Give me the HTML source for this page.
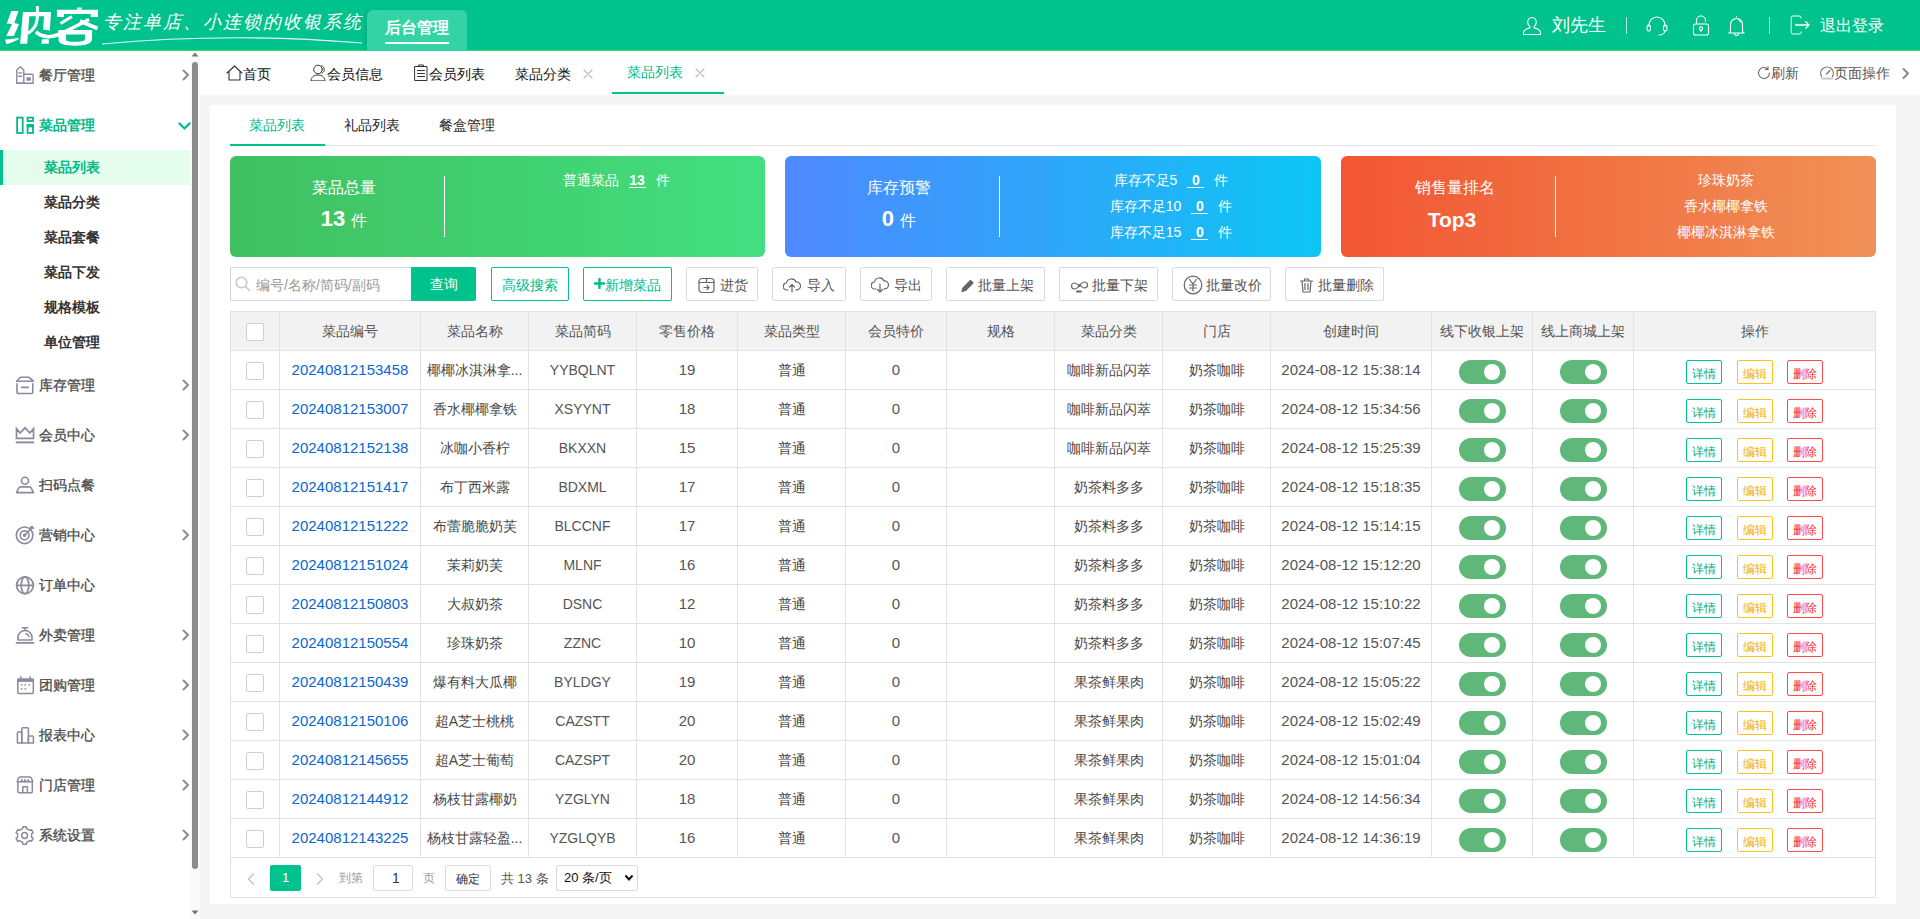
<!DOCTYPE html>
<html><head><meta charset="utf-8"><title>纳客</title><style>

*{box-sizing:border-box;margin:0;padding:0}
html,body{width:1920px;height:919px;overflow:hidden}
body{position:relative;background:#f5f5f5;font-family:"Liberation Sans",sans-serif;font-size:14px;color:#333}
.abs{position:absolute}
#hdr{left:0;top:0;width:1920px;height:51px;background:#00c28c;border-bottom:1px solid #44d36e}
#side{left:0;top:51px;width:190px;height:868px;background:#fff}
#sb{left:190px;top:51px;width:10px;height:868px;background:#fafafa}
#tabs{left:200px;top:51px;width:1720px;height:44px;background:#fff}
#panel{left:210px;top:105px;width:1686px;height:799px;background:#fff}
.t{position:absolute;white-space:nowrap;line-height:1}
.mi{position:absolute;left:0;width:190px;height:50px}
.mi .lb{position:absolute;left:39px;top:18px;font-size:14px;font-weight:bold;color:#555;line-height:14px;white-space:nowrap}
.mi svg.ic{position:absolute;left:15px;top:15px}
.mi svg.ch{position:absolute;left:180px;top:19px}
.si{position:absolute;left:0;width:190px;height:35px}
.si .lb{position:absolute;left:44px;top:11px;font-size:14px;font-weight:bold;color:#333;line-height:14px;white-space:nowrap}
.btn{position:absolute;top:267px;height:34px;border:1px solid #dcdcdc;border-radius:2px;background:#fff;color:#555;font-size:14px;line-height:14px;white-space:nowrap}
.btn span{position:absolute;top:10px}
.btn svg{position:absolute}
.card{position:absolute;top:156px;height:101px;border-radius:6px;color:#fff}
.card .dv{position:absolute;left:214px;top:20px;width:1px;height:61px;background:#fff}
.cell{position:absolute;text-align:center;white-space:nowrap;line-height:1}
.vl{position:absolute;top:311px;width:1px;height:587px;background:#e2e2e2}
.hl{position:absolute;left:230px;width:1646px;height:1px;background:#e2e2e2}
.tg{position:absolute;width:47px;height:24px;border-radius:12px;background:#5fb87a}
.tg:after{content:"";position:absolute;left:25px;top:4px;width:16px;height:16px;border-radius:50%;background:#fff}
.ob{position:absolute;width:36px;height:24px;border:1px solid;border-radius:2px;font-size:12px;line-height:12px;text-align:center;padding-top:7px;background:#fff}
.cb{position:absolute;left:246px;width:18px;height:18px;border:1px solid #cfcfcf;border-radius:2px;background:#fff}

</style></head><body>
<div id="hdr" class="abs">
<svg class="abs" style="left:0;top:0" width="120" height="50" viewBox="0 0 120 50" fill="#fff">
<path d="M11.2 10.9L18.5 10.9L14.3 22.9L19 23.9L13.9 35.9L6.3 35.9L12 23.9L6.8 23.4Z"/>
<path d="M5.2 39.5Q12 39.3 18.6 37.8L18.4 39.6Q13 42.5 7.5 44L6 43.6Z"/>
<path d="M22.9 12L29.7 12L27.2 43.8L20.1 43.8Z"/>
<path d="M29 12L51.1 12L49.8 30.5L43 29.5L44 16.3L29 16.3Z"/>
<path d="M35.9 6L38.9 6L38.9 16.3L35.9 16.3Z"/>
<path d="M37.4 15C37.4 24 35 28.5 28 33.5" fill="none" stroke="#fff" stroke-width="3"/>
<path d="M35.8 32Q46 40 58.5 34.5Q72 28.5 89 19.5" fill="none" stroke="#fff" stroke-width="3.6"/>
<path d="M42 39.2L49 39.2L48.7 43.8L41.4 43.8Z"/>
<path d="M56.9 9.8L98 9.8L98 17L90.8 17L90.8 14L64 14L64 17L56.9 17Z"/>
<path d="M77 7.5L81.7 7.5L81.7 9.8L77 9.8Z"/>
<path d="M60.5 23.5L72 16.5" fill="none" stroke="#fff" stroke-width="3"/>
<path d="M80 21L97.5 28.5" fill="none" stroke="#fff" stroke-width="4"/>
<path fill-rule="evenodd" d="M58.2 30L92.2 30L92 40Q90 45.7 75 45.7Q59 45.7 58.5 40Z M66 34.6L85 34.6L84.8 40Q84 41.8 75 41.8Q66.5 41.8 66 40Z"/>
</svg>
<div class="t" style="left:103px;top:13px;font-size:18px;color:#fff;font-family:'Liberation Serif',serif;font-style:italic;letter-spacing:2px">专注单店、小连锁的收银系统</div>
<svg class="abs" style="left:100px;top:34px" width="270" height="14"><path d="M2 10 Q 130 -2 262 9" stroke="#fff" stroke-width="1.1" fill="none" opacity=".9"/></svg>
<div class="abs" style="left:367px;top:10px;width:100px;height:41px;background:#33d3a5;border-radius:6px 6px 0 0;box-shadow:-2px 0 3px rgba(0,60,40,.12)"></div>
<div class="t" style="left:385px;top:20px;font-size:16px;font-weight:bold;color:#fff">后台管理</div>
<div class="abs" style="left:385px;top:42px;width:64px;height:2px;background:#fff"></div>
<svg class="abs" style="left:1522px;top:16px" width="20" height="20" viewBox="0 0 20 20" fill="none" stroke="#fff" stroke-width="1.1">
<path d="M10 1.5c-2.6 0-4.3 2-4.3 4.6 0 2 1 3.7 2.2 4.5v1.3c-3.6.9-6.4 2.7-6.4 4.8v1.8h17v-1.8c0-2.1-2.8-3.9-6.4-4.8v-1.3c1.2-.8 2.2-2.5 2.2-4.5 0-2.6-1.700-4.6-4.3-4.6z"/></svg>
<div class="t" style="left:1552px;top:16px;font-size:18px;color:#fff">刘先生</div>
<div class="abs" style="left:1626px;top:17px;width:1px;height:17px;background:#b9eedd"></div>
<svg class="abs" style="left:1646px;top:16px" width="22" height="20" viewBox="0 0 22 20" fill="none" stroke="#fff" stroke-width="1.1">
<path d="M3 11V9a8 8 0 0 1 16 0v2"/><rect x="1" y="9" width="3.5" height="6" rx="1.7"/><rect x="17.5" y="9" width="3.5" height="6" rx="1.7"/><path d="M19 15c-.5 2.5-3 4-6.5 4"/></svg>
<svg class="abs" style="left:1692px;top:15px" width="18" height="21" viewBox="0 0 18 21" fill="none" stroke="#fff" stroke-width="1.1">
<path d="M4.5 9V5.5a4.5 4.5 0 0 1 9 0V7"/><rect x="1.5" y="9" width="15" height="11" rx="2"/><circle cx="9" cy="13.5" r="1.6"/><path d="M9 15.1v1.8"/></svg>
<svg class="abs" style="left:1728px;top:15px" width="17" height="21" viewBox="0 0 17 21" fill="none" stroke="#fff" stroke-width="1.1">
<path d="M8.5 1v1.2M2.5 16.5v-7a6 6 0 0 1 12 0v7l1.5 1.5H1z"/><path d="M6.5 18.5a2 2 0 0 0 4 0"/><path d="M10.5 4.5c1.2.6 2 1.6 2.3 2.8"/></svg>
<div class="abs" style="left:1769px;top:17px;width:1px;height:17px;background:#b9eedd"></div>
<svg class="abs" style="left:1790px;top:15px" width="21" height="20" viewBox="0 0 21 20" fill="none" stroke-width="1.3">
<path d="M11 3.5V2.8A1.8 1.8 0 0 0 9.2 1H3A1.8 1.8 0 0 0 1.2 2.8v14.4A1.8 1.8 0 0 0 3 19h6.2a1.8 1.8 0 0 0 1.8-1.8v-.7" stroke="#a8ead4"/>
<path d="M5 10h14M15.5 6.5 19 10l-3.5 3.5" stroke="#fff"/></svg>
<div class="t" style="left:1820px;top:18px;font-size:16px;color:#fff">退出登录</div>
</div>
<div id="side" class="abs"></div>
<div id="sb" class="abs"></div>
<div class="abs" style="left:192px;top:62px;width:6px;height:807px;background:#8b8b8b;border-radius:3px"></div>
<svg class="abs" style="left:190px;top:50px" width="10" height="8"><path d="M1.5 6.5h7L5 2.5z" fill="#777"/></svg>
<svg class="abs" style="left:190px;top:909px" width="10" height="8"><path d="M1.5 1.5h7L5 5.5z" fill="#777"/></svg>
<svg class="abs" style="left:15px;top:65px" width="20" height="20" viewBox="0 0 20 20" fill="none" stroke="#8c8a9b" stroke-width="1.9" stroke-linecap="round" stroke-linejoin="round"><g stroke-width="1.4"><path d="M1.8 18.3V5L5.3 1.8 8.8 5V18.3z"/><path d="M3.8 7.9h3M3.8 11.3h3"/><path d="M8.8 9.2h8.3a1 1 0 0 1 1 1v8.1H1.8"/></g><rect x="11.5" y="12.3" width="4.3" height="3.4" fill="#8c8a9b" stroke="none"/></svg>
<div class="t" style="left:39px;top:68px;font-size:14px;color:#4a4a4a;-webkit-text-stroke:0.3px #4a4a4a">餐厅管理</div>
<svg class="abs" style="left:181px;top:69px" width="10" height="12" viewBox="0 0 10 12" fill="none" stroke="#8c8a9b" stroke-width="2" stroke-linecap="round" stroke-linejoin="round"><path d="M2.5 1.5 7 6l-4.5 4.5"/></svg>
<svg class="abs" style="left:15px;top:115px" width="20" height="20" viewBox="0 0 20 20" fill="none" stroke="#00b98a" stroke-width="1.9" stroke-linecap="round" stroke-linejoin="round"><g stroke-width="1.8" stroke-linejoin="miter"><rect x="2.1" y="2.6" width="5.6" height="15.4"/><rect x="12.6" y="2.6" width="5.4" height="3.4"/><rect x="12.6" y="10.1" width="5.4" height="7.9"/></g><rect x="11.7" y="9.2" width="7.2" height="3.2" fill="#00b98a" stroke="none"/></svg>
<div class="t" style="left:39px;top:118px;font-size:14px;color:#00b98a;font-weight:bold">菜品管理</div>
<svg class="abs" style="left:178px;top:122px" width="13" height="9" viewBox="0 0 13 9" fill="none" stroke="#00b98a" stroke-width="2.2" stroke-linecap="round" stroke-linejoin="round"><path d="M1.5 1.5 6.5 6.5l5-5"/></svg>
<svg class="abs" style="left:15px;top:375px" width="20" height="20" viewBox="0 0 20 20" fill="none" stroke="#8c8a9b" stroke-width="1.9" stroke-linecap="round" stroke-linejoin="round"><g stroke-width="1.6"><path d="M1.5 6.2 5.5 2.3h8.6l4.2 3.9z"/><path d="M2 8.9v8.3a1.3 1.3 0 0 0 1.3 1.3h13.2a1.3 1.3 0 0 0 1.3-1.3V8.9"/><path d="M6.5 12.4h6.8"/></g></svg>
<div class="t" style="left:39px;top:378px;font-size:14px;color:#4a4a4a;-webkit-text-stroke:0.3px #4a4a4a">库存管理</div>
<svg class="abs" style="left:181px;top:379px" width="10" height="12" viewBox="0 0 10 12" fill="none" stroke="#8c8a9b" stroke-width="2" stroke-linecap="round" stroke-linejoin="round"><path d="M2.5 1.5 7 6l-4.5 4.5"/></svg>
<svg class="abs" style="left:15px;top:425px" width="20" height="20" viewBox="0 0 20 20" fill="none" stroke="#8c8a9b" stroke-width="1.9" stroke-linecap="round" stroke-linejoin="round"><g stroke-width="1.7" stroke-linejoin="miter" stroke-linecap="butt"><path d="M1.5 13.3V3.6l3.6 4.4L10 2.8 14.9 8l3.6-4.4v9.7z"/><path d="M0.8 17.4h18.4" stroke-width="1.9"/></g></svg>
<div class="t" style="left:39px;top:428px;font-size:14px;color:#4a4a4a;-webkit-text-stroke:0.3px #4a4a4a">会员中心</div>
<svg class="abs" style="left:181px;top:429px" width="10" height="12" viewBox="0 0 10 12" fill="none" stroke="#8c8a9b" stroke-width="2" stroke-linecap="round" stroke-linejoin="round"><path d="M2.5 1.5 7 6l-4.5 4.5"/></svg>
<svg class="abs" style="left:15px;top:475px" width="20" height="20" viewBox="0 0 20 20" fill="none" stroke="#8c8a9b" stroke-width="1.9" stroke-linecap="round" stroke-linejoin="round"><g stroke-width="1.6"><circle cx="10" cy="5.8" r="3.5"/><path d="M1.5 17.6l2.3-4.6c.4-.7 1-1.1 1.8-1.1h8.8c.8 0 1.4.4 1.8 1.1l2.3 4.6z"/></g></svg>
<div class="t" style="left:39px;top:478px;font-size:14px;color:#4a4a4a;-webkit-text-stroke:0.3px #4a4a4a">扫码点餐</div>
<svg class="abs" style="left:15px;top:525px" width="20" height="20" viewBox="0 0 20 20" fill="none" stroke="#8c8a9b" stroke-width="1.9" stroke-linecap="round" stroke-linejoin="round"><g stroke-width="1.6"><circle cx="9.6" cy="10.3" r="8.3"/><circle cx="9.6" cy="10.3" r="4.4"/><circle cx="9.6" cy="10.3" r="1" fill="#8c8a9b"/><path d="M9.6 10.3 17 2.9"/><path d="M15.5 2.2 17.3 1.5 17.2 3.2 18.9 3.1" stroke-width="1.5"/></g></svg>
<div class="t" style="left:39px;top:528px;font-size:14px;color:#4a4a4a;-webkit-text-stroke:0.3px #4a4a4a">营销中心</div>
<svg class="abs" style="left:181px;top:529px" width="10" height="12" viewBox="0 0 10 12" fill="none" stroke="#8c8a9b" stroke-width="2" stroke-linecap="round" stroke-linejoin="round"><path d="M2.5 1.5 7 6l-4.5 4.5"/></svg>
<svg class="abs" style="left:15px;top:575px" width="20" height="20" viewBox="0 0 20 20" fill="none" stroke="#8c8a9b" stroke-width="1.9" stroke-linecap="round" stroke-linejoin="round"><g stroke-width="1.7"><circle cx="10" cy="10.3" r="8.4"/><path d="M1.6 10.3h16.8"/><ellipse cx="10" cy="10.3" rx="3.8" ry="8.4"/></g></svg>
<div class="t" style="left:39px;top:578px;font-size:14px;color:#4a4a4a;-webkit-text-stroke:0.3px #4a4a4a">订单中心</div>
<svg class="abs" style="left:15px;top:625px" width="20" height="20" viewBox="0 0 20 20" fill="none" stroke="#8c8a9b" stroke-width="1.9" stroke-linecap="round" stroke-linejoin="round"><g stroke-width="1.6"><path d="M7.3 2.7h5.4M10 2.7v2.6"/><path d="M3 15V12.5a7 7 0 0 1 14 0V15z"/><path d="M1.4 17.9h17.2"/><path d="M11 8.7c1.5.5 2.6 1.6 3.2 2.8"/></g></svg>
<div class="t" style="left:39px;top:628px;font-size:14px;color:#4a4a4a;-webkit-text-stroke:0.3px #4a4a4a">外卖管理</div>
<svg class="abs" style="left:181px;top:629px" width="10" height="12" viewBox="0 0 10 12" fill="none" stroke="#8c8a9b" stroke-width="2" stroke-linecap="round" stroke-linejoin="round"><path d="M2.5 1.5 7 6l-4.5 4.5"/></svg>
<svg class="abs" style="left:15px;top:675px" width="20" height="20" viewBox="0 0 20 20" fill="none" stroke="#8c8a9b" stroke-width="1.9" stroke-linecap="round" stroke-linejoin="round"><g stroke-width="1.5"><rect x="2.8" y="4.2" width="15.5" height="14.2" rx="1"/><path d="M5.8 1.8v2.6M15.1 1.8v2.6"/></g><rect x="2.2" y="3.6" width="16.7" height="3.3" fill="#8c8a9b" stroke="none"/><g fill="#8c8a9b" stroke="none"><rect x="5.9" y="9.2" width="1.5" height="1.5"/><rect x="9.6" y="9.2" width="1.5" height="1.5"/><rect x="13.5" y="9.2" width="1.5" height="1.5"/><rect x="5.9" y="13.1" width="1.5" height="1.5"/><rect x="9.6" y="13.1" width="1.5" height="1.5"/></g></svg>
<div class="t" style="left:39px;top:678px;font-size:14px;color:#4a4a4a;-webkit-text-stroke:0.3px #4a4a4a">团购管理</div>
<svg class="abs" style="left:181px;top:679px" width="10" height="12" viewBox="0 0 10 12" fill="none" stroke="#8c8a9b" stroke-width="2" stroke-linecap="round" stroke-linejoin="round"><path d="M2.5 1.5 7 6l-4.5 4.5"/></svg>
<svg class="abs" style="left:15px;top:725px" width="20" height="20" viewBox="0 0 20 20" fill="none" stroke="#8c8a9b" stroke-width="1.9" stroke-linecap="round" stroke-linejoin="round"><g stroke-width="1.5" stroke-linejoin="round"><path d="M2.4 18.1V7.8a.9.9 0 0 1 .9-.9h3.5V18.1z"/><path d="M6.8 18.1V3.6a.9.9 0 0 1 .9-.9h4.8a.9.9 0 0 1 .9.9V18.1z"/><path d="M13.4 18.1V11.9a.9.9 0 0 1 .9-.9h3.2a.9.9 0 0 1 .9.9v6.2z"/></g></svg>
<div class="t" style="left:39px;top:728px;font-size:14px;color:#4a4a4a;-webkit-text-stroke:0.3px #4a4a4a">报表中心</div>
<svg class="abs" style="left:181px;top:729px" width="10" height="12" viewBox="0 0 10 12" fill="none" stroke="#8c8a9b" stroke-width="2" stroke-linecap="round" stroke-linejoin="round"><path d="M2.5 1.5 7 6l-4.5 4.5"/></svg>
<svg class="abs" style="left:15px;top:775px" width="20" height="20" viewBox="0 0 20 20" fill="none" stroke="#8c8a9b" stroke-width="1.9" stroke-linecap="round" stroke-linejoin="round"><g stroke-width="1.5"><path d="M2.2 6.8 3.6 3a1.5 1.5 0 0 1 1.4-1h10a1.5 1.5 0 0 1 1.4 1l1.4 3.8z"/><path d="M6 6.8l.8-2.4.8 2.4M9.2 6.8l.8-2.4.8 2.4M12.4 6.8l.8-2.4.8 2.4" stroke-width="1.2"/><path d="M2.9 7v9.8a1 1 0 0 0 1 1h12.4a1 1 0 0 0 1-1V7"/><path d="M7.8 17.8v-6.1h4.6v6.1"/></g></svg>
<div class="t" style="left:39px;top:778px;font-size:14px;color:#4a4a4a;-webkit-text-stroke:0.3px #4a4a4a">门店管理</div>
<svg class="abs" style="left:181px;top:779px" width="10" height="12" viewBox="0 0 10 12" fill="none" stroke="#8c8a9b" stroke-width="2" stroke-linecap="round" stroke-linejoin="round"><path d="M2.5 1.5 7 6l-4.5 4.5"/></svg>
<svg class="abs" style="left:15px;top:825px" width="20" height="20" viewBox="0 0 20 20" fill="none" stroke="#8c8a9b" stroke-width="1.9" stroke-linecap="round" stroke-linejoin="round"><g stroke-width="1.5"><path d="M7.88 1.67 L11.32 1.67 L11.58 3.58 L14.60 5.32 L16.39 4.60 L18.11 7.57 L16.59 8.76 L16.59 12.24 L18.11 13.43 L16.39 16.40 L14.60 15.68 L11.58 17.42 L11.32 19.33 L7.88 19.33 L7.62 17.42 L4.60 15.68 L2.81 16.40 L1.09 13.43 L2.61 12.24 L2.61 8.76 L1.09 7.57 L2.81 4.60 L4.60 5.32 L7.62 3.58Z"/><circle cx="9.6" cy="10.5" r="2.9"/></g></svg>
<div class="t" style="left:39px;top:828px;font-size:14px;color:#4a4a4a;-webkit-text-stroke:0.3px #4a4a4a">系统设置</div>
<svg class="abs" style="left:181px;top:829px" width="10" height="12" viewBox="0 0 10 12" fill="none" stroke="#8c8a9b" stroke-width="2" stroke-linecap="round" stroke-linejoin="round"><path d="M2.5 1.5 7 6l-4.5 4.5"/></svg>
<div class="abs" style="left:0;top:150px;width:190px;height:35px;background:#e4fdec"></div>
<div class="abs" style="left:0;top:150px;width:3px;height:35px;background:#00c28c"></div>
<div class="t" style="left:44px;top:160.0px;font-size:14px;font-weight:bold;color:#00b98a">菜品列表</div>
<div class="t" style="left:44px;top:195.0px;font-size:14px;font-weight:bold;color:#333">菜品分类</div>
<div class="t" style="left:44px;top:230.0px;font-size:14px;font-weight:bold;color:#333">菜品套餐</div>
<div class="t" style="left:44px;top:265.0px;font-size:14px;font-weight:bold;color:#333">菜品下发</div>
<div class="t" style="left:44px;top:300.0px;font-size:14px;font-weight:bold;color:#333">规格模板</div>
<div class="t" style="left:44px;top:335.0px;font-size:14px;font-weight:bold;color:#333">单位管理</div>
<div id="tabs" class="abs"></div>
<svg class="abs" style="left:226px;top:65px;" width="17" height="16" viewBox="0 0 17 16" fill="none" stroke="#333" stroke-width="1.1" stroke-linecap="round" stroke-linejoin="round"><path d="M1 8 8.5 1 16 8M3 6.5V15h11V6.5"/></svg>
<div class="t" style="left:243px;top:67px;font-size:14px;color:#111;">首页</div>
<svg class="abs" style="left:310px;top:64px;" width="17" height="17" viewBox="0 0 17 17" fill="none" stroke="#333" stroke-width="1.0" stroke-linecap="round" stroke-linejoin="round"><circle cx="8" cy="5.5" r="4.3"/><path d="M1 16.5c.3-3.5 3-5.5 7-5.5s6.7 2 7 5.5z"/><path d="M11.5 1.8c1.8.5 2.8 2 2.8 3.7 0 1.6-.9 3-2.4 3.6"/></svg>
<div class="t" style="left:327px;top:67px;font-size:14px;color:#111;">会员信息</div>
<svg class="abs" style="left:414px;top:64px;" width="14" height="17" viewBox="0 0 14 17" fill="none" stroke="#333" stroke-width="1.0" stroke-linecap="round" stroke-linejoin="round"><rect x="1" y="2.5" width="12" height="14"/><path d="M4.5 2.5V1h5v1.5M3.5 6.5h7M3.5 9.5h7M3.5 12.5h7"/></svg>
<div class="t" style="left:429px;top:67px;font-size:14px;color:#111;">会员列表</div>
<div class="t" style="left:515px;top:67px;font-size:14px;color:#111;">菜品分类</div>
<svg class="abs" style="left:583px;top:69px;" width="10" height="10" viewBox="0 0 10 10" fill="none" stroke="#bbb" stroke-width="1.1" stroke-linecap="round" stroke-linejoin="round"><path d="M1 1l8 8M9 1 1 9"/></svg>
<div class="t" style="left:627px;top:65px;font-size:14px;color:#00b98a;">菜品列表</div>
<svg class="abs" style="left:695px;top:68px;" width="10" height="10" viewBox="0 0 10 10" fill="none" stroke="#bbb" stroke-width="1.1" stroke-linecap="round" stroke-linejoin="round"><path d="M1 1l8 8M9 1 1 9"/></svg>
<div class="abs" style="left:612px;top:92px;width:112px;height:2px;background:#00c28c"></div>
<svg class="abs" style="left:1757px;top:66px;" width="14" height="14" viewBox="0 0 14 14" fill="none" stroke="#666" stroke-width="1.1" stroke-linecap="round" stroke-linejoin="round"><path d="M12.5 7A5.5 5.5 0 1 1 10.8 3"/><path d="M11 .8v2.6H8.4"/></svg>
<div class="t" style="left:1771px;top:66px;font-size:14px;color:#555;">刷新</div>
<svg class="abs" style="left:1820px;top:65px;" width="14" height="15" viewBox="0 0 14 15" fill="none" stroke="#666" stroke-width="1.1" stroke-linecap="round" stroke-linejoin="round"><path d="M1.6 11.5A6.3 6.3 0 1 1 12.4 11.5"/><path d="M6.5 9l3.5-3.5"/><path d="M1.5 13.5h11" stroke="#c8c8c8" stroke-width="1.8"/></svg>
<div class="t" style="left:1834px;top:66px;font-size:14px;color:#555;">页面操作</div>
<svg class="abs" style="left:1901px;top:67px;" width="10" height="13" viewBox="0 0 10 13" fill="none" stroke="#888" stroke-width="2" stroke-linecap="round" stroke-linejoin="round"><path d="M2.5 2 7 6.5 2.5 11"/></svg>
<div id="panel" class="abs"></div>
<div class="abs" style="left:230px;top:145px;width:1646px;height:1px;background:#e6e6e6"></div>
<div class="abs" style="left:230px;top:144px;width:95px;height:2px;background:#00c28c"></div>
<div class="t" style="left:249px;top:118px;font-size:14px;color:#00b98a">菜品列表</div>
<div class="t" style="left:344px;top:118px;font-size:14px;color:#222">礼品列表</div>
<div class="t" style="left:439px;top:118px;font-size:14px;color:#222">餐盒管理</div>
<div class="card" style="left:230px;width:535px;background:linear-gradient(90deg,#40c060,#42df80)">
<div class="dv"></div>
<div class="cell" style="left:0;width:228px;top:24px;font-size:16px">菜品总量</div>
<div class="cell" style="left:0;width:228px;top:52px;font-size:22px;font-weight:bold">13 <span style="font-size:16px;font-weight:normal">件</span></div>
<div class="cell" style="left:236px;width:300px;top:17px;font-size:14px">普通菜品<span style="display:inline-block;min-width:17px;margin:0 10px;border-bottom:1px solid #fff;font-weight:bold;line-height:13px">13</span>件</div>
</div>
<div class="card" style="left:785px;width:536px;background:linear-gradient(90deg,#4f88ff,#0cc6f4)">
<div class="dv"></div>
<div class="cell" style="left:0;width:228px;top:24px;font-size:16px">库存预警</div>
<div class="cell" style="left:0;width:228px;top:52px;font-size:22px;font-weight:bold">0 <span style="font-size:16px;font-weight:normal">件</span></div>
<div class="cell" style="left:236px;width:300px;top:17px;font-size:14px">库存不足5<span style="display:inline-block;min-width:17px;margin:0 10px;border-bottom:1px solid #fff;font-weight:bold;line-height:13px">0</span>件</div>
<div class="cell" style="left:236px;width:300px;top:43px;font-size:14px">库存不足10<span style="display:inline-block;min-width:17px;margin:0 10px;border-bottom:1px solid #fff;font-weight:bold;line-height:13px">0</span>件</div>
<div class="cell" style="left:236px;width:300px;top:69px;font-size:14px">库存不足15<span style="display:inline-block;min-width:17px;margin:0 10px;border-bottom:1px solid #fff;font-weight:bold;line-height:13px">0</span>件</div>
</div>
<div class="card" style="left:1341px;width:535px;background:linear-gradient(90deg,#f25532,#f09157)">
<div class="dv"></div>
<div class="cell" style="left:0;width:228px;top:24px;font-size:16px">销售量排名</div>
<div class="cell" style="left:0;width:222px;top:53px;font-size:21px;font-weight:bold">Top3</div>
<div class="cell" style="left:235px;width:300px;top:17px;font-size:14px">珍珠奶茶</div>
<div class="cell" style="left:235px;width:300px;top:43px;font-size:14px">香水椰椰拿铁</div>
<div class="cell" style="left:235px;width:300px;top:69px;font-size:14px">椰椰冰淇淋拿铁</div>
</div>
<div class="abs" style="left:230px;top:267px;width:182px;height:34px;border:1px solid #d6d6d6;border-right:none;border-radius:2px 0 0 2px;background:#fff"></div>
<svg class="abs" style="left:235px;top:276px;" width="16" height="16" viewBox="0 0 16 16" fill="none" stroke="#c8c8c8" stroke-width="1.6" stroke-linecap="round" stroke-linejoin="round"><circle cx="6.5" cy="6.5" r="5.3"/><path d="M10.5 10.5l4 4"/></svg>
<div class="t" style="left:256px;top:278px;font-size:14px;color:#999;">编号/名称/简码/副码</div>
<div class="abs" style="left:411px;top:267px;width:65px;height:34px;background:#00c28c;border-radius:0 2px 2px 0"></div>
<div class="t" style="left:430px;top:277px;font-size:14px;color:#fff;">查询</div>
<div class="btn" style="left:491px;width:78px;border-color:#00c28c;color:#00b98a"><span style="left:10px">高级搜索</span></div>
<div class="btn" style="left:583px;width:89px;border-color:#00c28c;color:#00b98a"><span style="left:21px">新增菜品</span></div>
<svg class="abs" style="left:594px;top:278px;" width="11" height="11" viewBox="0 0 11 11" fill="none" stroke="#00b98a" stroke-width="2.4" stroke-linecap="round" stroke-linejoin="round"><path d="M5.5 1v9M1 5.5h9"/></svg>
<div class="btn" style="left:686px;width:72px"><span style="left:33px">进货</span><svg style="left:11px;top:9px" width="17" height="17" viewBox="0 0 17 17" fill="none" stroke="#666" stroke-width="1.2" stroke-linecap="round" stroke-linejoin="round"><rect x="1" y="1.5" width="15" height="14" rx="3"/><path d="M1 5.5h15M8.5 1.5v4M6 10.5h5M9 8.5l2 2-2 2"/></svg></div>
<div class="btn" style="left:772px;width:74px"><span style="left:34px">导入</span><svg style="left:10px;top:8px" width="18" height="18" viewBox="0 0 18 18" fill="none" stroke="#666" stroke-width="1.2" stroke-linecap="round" stroke-linejoin="round"><path d="M5 14H4a3.5 3.5 0 0 1-.5-7A5 5 0 0 1 13 6a3.7 3.7 0 0 1 1 7.9h-1"/><path d="M9 16V8.5M6.5 11l2.5-2.5 2.5 2.5"/></svg></div>
<div class="btn" style="left:860px;width:72px"><span style="left:33px">导出</span><svg style="left:10px;top:8px" width="18" height="18" viewBox="0 0 18 18" fill="none" stroke="#666" stroke-width="1.2" stroke-linecap="round" stroke-linejoin="round"><path d="M5 13H4a3.5 3.5 0 0 1-.5-7A5 5 0 0 1 13 5a3.7 3.7 0 0 1 1 7.9h-1"/><path d="M9 8v8M6.5 13.5 9 16l2.5-2.5"/></svg></div>
<div class="btn" style="left:946px;width:99px"><span style="left:31px">批量上架</span><svg style="left:13px;top:10px" width="15" height="15" viewBox="0 0 15 15" fill="none" stroke="#666" stroke-width="1.2" stroke-linecap="round" stroke-linejoin="round"><path d="M2 13.5l1-3.5 7.5-7.5 2.5 2.5-7.5 7.5z" fill="#666"/></svg></div>
<div class="btn" style="left:1059px;width:99px"><span style="left:32px">批量下架</span><svg style="left:11px;top:10px" width="17" height="15" viewBox="0 0 17 15" fill="none" stroke="#666" stroke-width="1.2" stroke-linecap="round" stroke-linejoin="round"><path d="M8.5 8.5c-2-2.5-3.5-3.5-5-3.5a3 3 0 0 0 0 6c1.5 0 3-1 5-3.5s3.5-3.5 5-3.5a3 3 0 0 1 0 6c-1.5 0-3-1-5-3.5z"/><path d="M6 13.5h4" stroke-width="1.8"/></svg></div>
<div class="btn" style="left:1172px;width:99px"><span style="left:33px">批量改价</span><svg style="left:10px;top:7px" width="20" height="20" viewBox="0 0 20 20" fill="none" stroke="#666" stroke-width="1.2" stroke-linecap="round" stroke-linejoin="round"><circle cx="10" cy="10" r="8.8"/><path d="M6.5 4.5 10 9l3.5-4.5M10 9v7M6.5 10h7M6.5 13h7"/></svg></div>
<div class="btn" style="left:1285px;width:99px"><span style="left:32px">批量删除</span><svg style="left:13px;top:9px" width="15" height="16" viewBox="0 0 15 16" fill="none" stroke="#666" stroke-width="1.2" stroke-linecap="round" stroke-linejoin="round"><path d="M1.5 4h12M5.5 4V2h4v2M3 4l1 11h7l1-11M6 6.5v6M9 6.5v6"/></svg></div>
<div class="abs" style="left:230px;top:311px;width:1646px;height:39px;background:#f2f2f2"></div>
<div class="vl" style="left:230px;height:587px"></div>
<div class="vl" style="left:279px;height:547px"></div>
<div class="vl" style="left:420px;height:547px"></div>
<div class="vl" style="left:528px;height:547px"></div>
<div class="vl" style="left:636px;height:547px"></div>
<div class="vl" style="left:737px;height:547px"></div>
<div class="vl" style="left:845px;height:547px"></div>
<div class="vl" style="left:946px;height:547px"></div>
<div class="vl" style="left:1054px;height:547px"></div>
<div class="vl" style="left:1162px;height:547px"></div>
<div class="vl" style="left:1270px;height:547px"></div>
<div class="vl" style="left:1431px;height:547px"></div>
<div class="vl" style="left:1532px;height:547px"></div>
<div class="vl" style="left:1633px;height:547px"></div>
<div class="vl" style="left:1875px;height:587px"></div>
<div class="hl" style="top:311px"></div>
<div class="hl" style="top:350px"></div>
<div class="hl" style="top:389px"></div>
<div class="hl" style="top:428px"></div>
<div class="hl" style="top:467px"></div>
<div class="hl" style="top:506px"></div>
<div class="hl" style="top:545px"></div>
<div class="hl" style="top:584px"></div>
<div class="hl" style="top:623px"></div>
<div class="hl" style="top:662px"></div>
<div class="hl" style="top:701px"></div>
<div class="hl" style="top:740px"></div>
<div class="hl" style="top:779px"></div>
<div class="hl" style="top:818px"></div>
<div class="hl" style="top:857px"></div>
<div class="hl" style="top:897px"></div>
<div class="cb" style="top:323px"></div>
<div class="cell" style="left:280px;width:140px;top:324px;font-size:14px;color:#555;">菜品编号</div>
<div class="cell" style="left:421px;width:107px;top:324px;font-size:14px;color:#555;">菜品名称</div>
<div class="cell" style="left:529px;width:107px;top:324px;font-size:14px;color:#555;">菜品简码</div>
<div class="cell" style="left:637px;width:100px;top:324px;font-size:14px;color:#555;">零售价格</div>
<div class="cell" style="left:738px;width:107px;top:324px;font-size:14px;color:#555;">菜品类型</div>
<div class="cell" style="left:846px;width:100px;top:324px;font-size:14px;color:#555;">会员特价</div>
<div class="cell" style="left:947px;width:107px;top:324px;font-size:14px;color:#555;">规格</div>
<div class="cell" style="left:1055px;width:107px;top:324px;font-size:14px;color:#555;">菜品分类</div>
<div class="cell" style="left:1163px;width:107px;top:324px;font-size:14px;color:#555;">门店</div>
<div class="cell" style="left:1271px;width:160px;top:324px;font-size:14px;color:#555;">创建时间</div>
<div class="cell" style="left:1432px;width:100px;top:324px;font-size:14px;color:#555;">线下收银上架</div>
<div class="cell" style="left:1533px;width:100px;top:324px;font-size:14px;color:#555;">线上商城上架</div>
<div class="cell" style="left:1634px;width:241px;top:324px;font-size:14px;color:#555;">操作</div>
<div class="cb" style="top:362px"></div>
<div class="cell" style="left:280px;width:140px;top:362px;font-size:15px;color:#0a66d0;">20240812153458</div>
<div class="cell" style="left:421px;width:107px;top:363px;font-size:14px;color:#484848;">椰椰冰淇淋拿...</div>
<div class="cell" style="left:529px;width:107px;top:363px;font-size:14px;color:#555;">YYBQLNT</div>
<div class="cell" style="left:637px;width:100px;top:362px;font-size:15px;color:#555;">19</div>
<div class="cell" style="left:738px;width:107px;top:363px;font-size:14px;color:#484848;">普通</div>
<div class="cell" style="left:846px;width:100px;top:362px;font-size:15px;color:#555;">0</div>
<div class="cell" style="left:1055px;width:107px;top:363px;font-size:14px;color:#484848;">咖啡新品闪萃</div>
<div class="cell" style="left:1163px;width:107px;top:363px;font-size:14px;color:#484848;">奶茶咖啡</div>
<div class="cell" style="left:1271px;width:160px;top:362px;font-size:15px;color:#555;">2024-08-12 15:38:14</div>
<div class="tg" style="left:1459px;top:360px"></div>
<div class="tg" style="left:1560px;top:360px"></div>
<div class="ob" style="left:1686px;top:360px;border-color:#00c28c;color:#00a87c">详情</div>
<div class="ob" style="left:1737px;top:360px;border-color:#ffc21f;color:#f2b000">编辑</div>
<div class="ob" style="left:1787px;top:360px;border-color:#ff4a4a;color:#f22c2c">删除</div>
<div class="cb" style="top:401px"></div>
<div class="cell" style="left:280px;width:140px;top:401px;font-size:15px;color:#0a66d0;">20240812153007</div>
<div class="cell" style="left:421px;width:107px;top:402px;font-size:14px;color:#484848;">香水椰椰拿铁</div>
<div class="cell" style="left:529px;width:107px;top:402px;font-size:14px;color:#555;">XSYYNT</div>
<div class="cell" style="left:637px;width:100px;top:401px;font-size:15px;color:#555;">18</div>
<div class="cell" style="left:738px;width:107px;top:402px;font-size:14px;color:#484848;">普通</div>
<div class="cell" style="left:846px;width:100px;top:401px;font-size:15px;color:#555;">0</div>
<div class="cell" style="left:1055px;width:107px;top:402px;font-size:14px;color:#484848;">咖啡新品闪萃</div>
<div class="cell" style="left:1163px;width:107px;top:402px;font-size:14px;color:#484848;">奶茶咖啡</div>
<div class="cell" style="left:1271px;width:160px;top:401px;font-size:15px;color:#555;">2024-08-12 15:34:56</div>
<div class="tg" style="left:1459px;top:399px"></div>
<div class="tg" style="left:1560px;top:399px"></div>
<div class="ob" style="left:1686px;top:399px;border-color:#00c28c;color:#00a87c">详情</div>
<div class="ob" style="left:1737px;top:399px;border-color:#ffc21f;color:#f2b000">编辑</div>
<div class="ob" style="left:1787px;top:399px;border-color:#ff4a4a;color:#f22c2c">删除</div>
<div class="cb" style="top:440px"></div>
<div class="cell" style="left:280px;width:140px;top:440px;font-size:15px;color:#0a66d0;">20240812152138</div>
<div class="cell" style="left:421px;width:107px;top:441px;font-size:14px;color:#484848;">冰咖小香柠</div>
<div class="cell" style="left:529px;width:107px;top:441px;font-size:14px;color:#555;">BKXXN</div>
<div class="cell" style="left:637px;width:100px;top:440px;font-size:15px;color:#555;">15</div>
<div class="cell" style="left:738px;width:107px;top:441px;font-size:14px;color:#484848;">普通</div>
<div class="cell" style="left:846px;width:100px;top:440px;font-size:15px;color:#555;">0</div>
<div class="cell" style="left:1055px;width:107px;top:441px;font-size:14px;color:#484848;">咖啡新品闪萃</div>
<div class="cell" style="left:1163px;width:107px;top:441px;font-size:14px;color:#484848;">奶茶咖啡</div>
<div class="cell" style="left:1271px;width:160px;top:440px;font-size:15px;color:#555;">2024-08-12 15:25:39</div>
<div class="tg" style="left:1459px;top:438px"></div>
<div class="tg" style="left:1560px;top:438px"></div>
<div class="ob" style="left:1686px;top:438px;border-color:#00c28c;color:#00a87c">详情</div>
<div class="ob" style="left:1737px;top:438px;border-color:#ffc21f;color:#f2b000">编辑</div>
<div class="ob" style="left:1787px;top:438px;border-color:#ff4a4a;color:#f22c2c">删除</div>
<div class="cb" style="top:479px"></div>
<div class="cell" style="left:280px;width:140px;top:479px;font-size:15px;color:#0a66d0;">20240812151417</div>
<div class="cell" style="left:421px;width:107px;top:480px;font-size:14px;color:#484848;">布丁西米露</div>
<div class="cell" style="left:529px;width:107px;top:480px;font-size:14px;color:#555;">BDXML</div>
<div class="cell" style="left:637px;width:100px;top:479px;font-size:15px;color:#555;">17</div>
<div class="cell" style="left:738px;width:107px;top:480px;font-size:14px;color:#484848;">普通</div>
<div class="cell" style="left:846px;width:100px;top:479px;font-size:15px;color:#555;">0</div>
<div class="cell" style="left:1055px;width:107px;top:480px;font-size:14px;color:#484848;">奶茶料多多</div>
<div class="cell" style="left:1163px;width:107px;top:480px;font-size:14px;color:#484848;">奶茶咖啡</div>
<div class="cell" style="left:1271px;width:160px;top:479px;font-size:15px;color:#555;">2024-08-12 15:18:35</div>
<div class="tg" style="left:1459px;top:477px"></div>
<div class="tg" style="left:1560px;top:477px"></div>
<div class="ob" style="left:1686px;top:477px;border-color:#00c28c;color:#00a87c">详情</div>
<div class="ob" style="left:1737px;top:477px;border-color:#ffc21f;color:#f2b000">编辑</div>
<div class="ob" style="left:1787px;top:477px;border-color:#ff4a4a;color:#f22c2c">删除</div>
<div class="cb" style="top:518px"></div>
<div class="cell" style="left:280px;width:140px;top:518px;font-size:15px;color:#0a66d0;">20240812151222</div>
<div class="cell" style="left:421px;width:107px;top:519px;font-size:14px;color:#484848;">布蕾脆脆奶芙</div>
<div class="cell" style="left:529px;width:107px;top:519px;font-size:14px;color:#555;">BLCCNF</div>
<div class="cell" style="left:637px;width:100px;top:518px;font-size:15px;color:#555;">17</div>
<div class="cell" style="left:738px;width:107px;top:519px;font-size:14px;color:#484848;">普通</div>
<div class="cell" style="left:846px;width:100px;top:518px;font-size:15px;color:#555;">0</div>
<div class="cell" style="left:1055px;width:107px;top:519px;font-size:14px;color:#484848;">奶茶料多多</div>
<div class="cell" style="left:1163px;width:107px;top:519px;font-size:14px;color:#484848;">奶茶咖啡</div>
<div class="cell" style="left:1271px;width:160px;top:518px;font-size:15px;color:#555;">2024-08-12 15:14:15</div>
<div class="tg" style="left:1459px;top:516px"></div>
<div class="tg" style="left:1560px;top:516px"></div>
<div class="ob" style="left:1686px;top:516px;border-color:#00c28c;color:#00a87c">详情</div>
<div class="ob" style="left:1737px;top:516px;border-color:#ffc21f;color:#f2b000">编辑</div>
<div class="ob" style="left:1787px;top:516px;border-color:#ff4a4a;color:#f22c2c">删除</div>
<div class="cb" style="top:557px"></div>
<div class="cell" style="left:280px;width:140px;top:557px;font-size:15px;color:#0a66d0;">20240812151024</div>
<div class="cell" style="left:421px;width:107px;top:558px;font-size:14px;color:#484848;">茉莉奶芙</div>
<div class="cell" style="left:529px;width:107px;top:558px;font-size:14px;color:#555;">MLNF</div>
<div class="cell" style="left:637px;width:100px;top:557px;font-size:15px;color:#555;">16</div>
<div class="cell" style="left:738px;width:107px;top:558px;font-size:14px;color:#484848;">普通</div>
<div class="cell" style="left:846px;width:100px;top:557px;font-size:15px;color:#555;">0</div>
<div class="cell" style="left:1055px;width:107px;top:558px;font-size:14px;color:#484848;">奶茶料多多</div>
<div class="cell" style="left:1163px;width:107px;top:558px;font-size:14px;color:#484848;">奶茶咖啡</div>
<div class="cell" style="left:1271px;width:160px;top:557px;font-size:15px;color:#555;">2024-08-12 15:12:20</div>
<div class="tg" style="left:1459px;top:555px"></div>
<div class="tg" style="left:1560px;top:555px"></div>
<div class="ob" style="left:1686px;top:555px;border-color:#00c28c;color:#00a87c">详情</div>
<div class="ob" style="left:1737px;top:555px;border-color:#ffc21f;color:#f2b000">编辑</div>
<div class="ob" style="left:1787px;top:555px;border-color:#ff4a4a;color:#f22c2c">删除</div>
<div class="cb" style="top:596px"></div>
<div class="cell" style="left:280px;width:140px;top:596px;font-size:15px;color:#0a66d0;">20240812150803</div>
<div class="cell" style="left:421px;width:107px;top:597px;font-size:14px;color:#484848;">大叔奶茶</div>
<div class="cell" style="left:529px;width:107px;top:597px;font-size:14px;color:#555;">DSNC</div>
<div class="cell" style="left:637px;width:100px;top:596px;font-size:15px;color:#555;">12</div>
<div class="cell" style="left:738px;width:107px;top:597px;font-size:14px;color:#484848;">普通</div>
<div class="cell" style="left:846px;width:100px;top:596px;font-size:15px;color:#555;">0</div>
<div class="cell" style="left:1055px;width:107px;top:597px;font-size:14px;color:#484848;">奶茶料多多</div>
<div class="cell" style="left:1163px;width:107px;top:597px;font-size:14px;color:#484848;">奶茶咖啡</div>
<div class="cell" style="left:1271px;width:160px;top:596px;font-size:15px;color:#555;">2024-08-12 15:10:22</div>
<div class="tg" style="left:1459px;top:594px"></div>
<div class="tg" style="left:1560px;top:594px"></div>
<div class="ob" style="left:1686px;top:594px;border-color:#00c28c;color:#00a87c">详情</div>
<div class="ob" style="left:1737px;top:594px;border-color:#ffc21f;color:#f2b000">编辑</div>
<div class="ob" style="left:1787px;top:594px;border-color:#ff4a4a;color:#f22c2c">删除</div>
<div class="cb" style="top:635px"></div>
<div class="cell" style="left:280px;width:140px;top:635px;font-size:15px;color:#0a66d0;">20240812150554</div>
<div class="cell" style="left:421px;width:107px;top:636px;font-size:14px;color:#484848;">珍珠奶茶</div>
<div class="cell" style="left:529px;width:107px;top:636px;font-size:14px;color:#555;">ZZNC</div>
<div class="cell" style="left:637px;width:100px;top:635px;font-size:15px;color:#555;">10</div>
<div class="cell" style="left:738px;width:107px;top:636px;font-size:14px;color:#484848;">普通</div>
<div class="cell" style="left:846px;width:100px;top:635px;font-size:15px;color:#555;">0</div>
<div class="cell" style="left:1055px;width:107px;top:636px;font-size:14px;color:#484848;">奶茶料多多</div>
<div class="cell" style="left:1163px;width:107px;top:636px;font-size:14px;color:#484848;">奶茶咖啡</div>
<div class="cell" style="left:1271px;width:160px;top:635px;font-size:15px;color:#555;">2024-08-12 15:07:45</div>
<div class="tg" style="left:1459px;top:633px"></div>
<div class="tg" style="left:1560px;top:633px"></div>
<div class="ob" style="left:1686px;top:633px;border-color:#00c28c;color:#00a87c">详情</div>
<div class="ob" style="left:1737px;top:633px;border-color:#ffc21f;color:#f2b000">编辑</div>
<div class="ob" style="left:1787px;top:633px;border-color:#ff4a4a;color:#f22c2c">删除</div>
<div class="cb" style="top:674px"></div>
<div class="cell" style="left:280px;width:140px;top:674px;font-size:15px;color:#0a66d0;">20240812150439</div>
<div class="cell" style="left:421px;width:107px;top:675px;font-size:14px;color:#484848;">爆有料大瓜椰</div>
<div class="cell" style="left:529px;width:107px;top:675px;font-size:14px;color:#555;">BYLDGY</div>
<div class="cell" style="left:637px;width:100px;top:674px;font-size:15px;color:#555;">19</div>
<div class="cell" style="left:738px;width:107px;top:675px;font-size:14px;color:#484848;">普通</div>
<div class="cell" style="left:846px;width:100px;top:674px;font-size:15px;color:#555;">0</div>
<div class="cell" style="left:1055px;width:107px;top:675px;font-size:14px;color:#484848;">果茶鲜果肉</div>
<div class="cell" style="left:1163px;width:107px;top:675px;font-size:14px;color:#484848;">奶茶咖啡</div>
<div class="cell" style="left:1271px;width:160px;top:674px;font-size:15px;color:#555;">2024-08-12 15:05:22</div>
<div class="tg" style="left:1459px;top:672px"></div>
<div class="tg" style="left:1560px;top:672px"></div>
<div class="ob" style="left:1686px;top:672px;border-color:#00c28c;color:#00a87c">详情</div>
<div class="ob" style="left:1737px;top:672px;border-color:#ffc21f;color:#f2b000">编辑</div>
<div class="ob" style="left:1787px;top:672px;border-color:#ff4a4a;color:#f22c2c">删除</div>
<div class="cb" style="top:713px"></div>
<div class="cell" style="left:280px;width:140px;top:713px;font-size:15px;color:#0a66d0;">20240812150106</div>
<div class="cell" style="left:421px;width:107px;top:714px;font-size:14px;color:#484848;">超A芝士桃桃</div>
<div class="cell" style="left:529px;width:107px;top:714px;font-size:14px;color:#555;">CAZSTT</div>
<div class="cell" style="left:637px;width:100px;top:713px;font-size:15px;color:#555;">20</div>
<div class="cell" style="left:738px;width:107px;top:714px;font-size:14px;color:#484848;">普通</div>
<div class="cell" style="left:846px;width:100px;top:713px;font-size:15px;color:#555;">0</div>
<div class="cell" style="left:1055px;width:107px;top:714px;font-size:14px;color:#484848;">果茶鲜果肉</div>
<div class="cell" style="left:1163px;width:107px;top:714px;font-size:14px;color:#484848;">奶茶咖啡</div>
<div class="cell" style="left:1271px;width:160px;top:713px;font-size:15px;color:#555;">2024-08-12 15:02:49</div>
<div class="tg" style="left:1459px;top:711px"></div>
<div class="tg" style="left:1560px;top:711px"></div>
<div class="ob" style="left:1686px;top:711px;border-color:#00c28c;color:#00a87c">详情</div>
<div class="ob" style="left:1737px;top:711px;border-color:#ffc21f;color:#f2b000">编辑</div>
<div class="ob" style="left:1787px;top:711px;border-color:#ff4a4a;color:#f22c2c">删除</div>
<div class="cb" style="top:752px"></div>
<div class="cell" style="left:280px;width:140px;top:752px;font-size:15px;color:#0a66d0;">20240812145655</div>
<div class="cell" style="left:421px;width:107px;top:753px;font-size:14px;color:#484848;">超A芝士葡萄</div>
<div class="cell" style="left:529px;width:107px;top:753px;font-size:14px;color:#555;">CAZSPT</div>
<div class="cell" style="left:637px;width:100px;top:752px;font-size:15px;color:#555;">20</div>
<div class="cell" style="left:738px;width:107px;top:753px;font-size:14px;color:#484848;">普通</div>
<div class="cell" style="left:846px;width:100px;top:752px;font-size:15px;color:#555;">0</div>
<div class="cell" style="left:1055px;width:107px;top:753px;font-size:14px;color:#484848;">果茶鲜果肉</div>
<div class="cell" style="left:1163px;width:107px;top:753px;font-size:14px;color:#484848;">奶茶咖啡</div>
<div class="cell" style="left:1271px;width:160px;top:752px;font-size:15px;color:#555;">2024-08-12 15:01:04</div>
<div class="tg" style="left:1459px;top:750px"></div>
<div class="tg" style="left:1560px;top:750px"></div>
<div class="ob" style="left:1686px;top:750px;border-color:#00c28c;color:#00a87c">详情</div>
<div class="ob" style="left:1737px;top:750px;border-color:#ffc21f;color:#f2b000">编辑</div>
<div class="ob" style="left:1787px;top:750px;border-color:#ff4a4a;color:#f22c2c">删除</div>
<div class="cb" style="top:791px"></div>
<div class="cell" style="left:280px;width:140px;top:791px;font-size:15px;color:#0a66d0;">20240812144912</div>
<div class="cell" style="left:421px;width:107px;top:792px;font-size:14px;color:#484848;">杨枝甘露椰奶</div>
<div class="cell" style="left:529px;width:107px;top:792px;font-size:14px;color:#555;">YZGLYN</div>
<div class="cell" style="left:637px;width:100px;top:791px;font-size:15px;color:#555;">18</div>
<div class="cell" style="left:738px;width:107px;top:792px;font-size:14px;color:#484848;">普通</div>
<div class="cell" style="left:846px;width:100px;top:791px;font-size:15px;color:#555;">0</div>
<div class="cell" style="left:1055px;width:107px;top:792px;font-size:14px;color:#484848;">果茶鲜果肉</div>
<div class="cell" style="left:1163px;width:107px;top:792px;font-size:14px;color:#484848;">奶茶咖啡</div>
<div class="cell" style="left:1271px;width:160px;top:791px;font-size:15px;color:#555;">2024-08-12 14:56:34</div>
<div class="tg" style="left:1459px;top:789px"></div>
<div class="tg" style="left:1560px;top:789px"></div>
<div class="ob" style="left:1686px;top:789px;border-color:#00c28c;color:#00a87c">详情</div>
<div class="ob" style="left:1737px;top:789px;border-color:#ffc21f;color:#f2b000">编辑</div>
<div class="ob" style="left:1787px;top:789px;border-color:#ff4a4a;color:#f22c2c">删除</div>
<div class="cb" style="top:830px"></div>
<div class="cell" style="left:280px;width:140px;top:830px;font-size:15px;color:#0a66d0;">20240812143225</div>
<div class="cell" style="left:421px;width:107px;top:831px;font-size:14px;color:#484848;">杨枝甘露轻盈...</div>
<div class="cell" style="left:529px;width:107px;top:831px;font-size:14px;color:#555;">YZGLQYB</div>
<div class="cell" style="left:637px;width:100px;top:830px;font-size:15px;color:#555;">16</div>
<div class="cell" style="left:738px;width:107px;top:831px;font-size:14px;color:#484848;">普通</div>
<div class="cell" style="left:846px;width:100px;top:830px;font-size:15px;color:#555;">0</div>
<div class="cell" style="left:1055px;width:107px;top:831px;font-size:14px;color:#484848;">果茶鲜果肉</div>
<div class="cell" style="left:1163px;width:107px;top:831px;font-size:14px;color:#484848;">奶茶咖啡</div>
<div class="cell" style="left:1271px;width:160px;top:830px;font-size:15px;color:#555;">2024-08-12 14:36:19</div>
<div class="tg" style="left:1459px;top:828px"></div>
<div class="tg" style="left:1560px;top:828px"></div>
<div class="ob" style="left:1686px;top:828px;border-color:#00c28c;color:#00a87c">详情</div>
<div class="ob" style="left:1737px;top:828px;border-color:#ffc21f;color:#f2b000">编辑</div>
<div class="ob" style="left:1787px;top:828px;border-color:#ff4a4a;color:#f22c2c">删除</div>
<svg class="abs" style="left:246px;top:872px" width="10" height="14"><path d="M8 1.5 2.5 7 8 12.5" stroke="#c0c0c0" stroke-width="1.3" fill="none"/></svg>
<div class="abs" style="left:270px;top:865px;width:31px;height:26px;background:#00c28c;border-radius:2px"></div>
<div class="cell" style="left:270px;width:31px;top:871px;font-size:13px;color:#fff">1</div>
<svg class="abs" style="left:315px;top:872px" width="10" height="14"><path d="M2 1.5 7.5 7 2 12.5" stroke="#c0c0c0" stroke-width="1.3" fill="none"/></svg>
<div class="t" style="left:339px;top:872px;font-size:12px;color:#999">到第</div>
<div class="abs" style="left:373px;top:865px;width:40px;height:26px;border:1px solid #dcdcdc;border-radius:2px;background:#fff"></div>
<div class="cell" style="left:373px;width:40px;top:871px;font-size:14px;color:#333;padding-left:6px">1</div>
<div class="t" style="left:423px;top:872px;font-size:12px;color:#999">页</div>
<div class="abs" style="left:445px;top:865px;width:46px;height:26px;border:1px solid #dcdcdc;border-radius:2px;background:#fff"></div>
<div class="cell" style="left:445px;width:46px;top:873px;font-size:12px;color:#333">确定</div>
<div class="t" style="left:501px;top:872px;font-size:13px;color:#555">共 13 条</div>
<div class="abs" style="left:556px;top:865px;width:82px;height:26px;border:1px solid #d9d9d9;border-radius:2px;background:#fff"></div>
<div class="t" style="left:564px;top:871px;font-size:13px;color:#111">20 条/页</div>
<svg class="abs" style="left:624px;top:874px" width="10" height="8"><path d="M1.5 1.5 5 5.5l3.5-4" stroke="#111" stroke-width="2" fill="none"/></svg>
</body></html>
